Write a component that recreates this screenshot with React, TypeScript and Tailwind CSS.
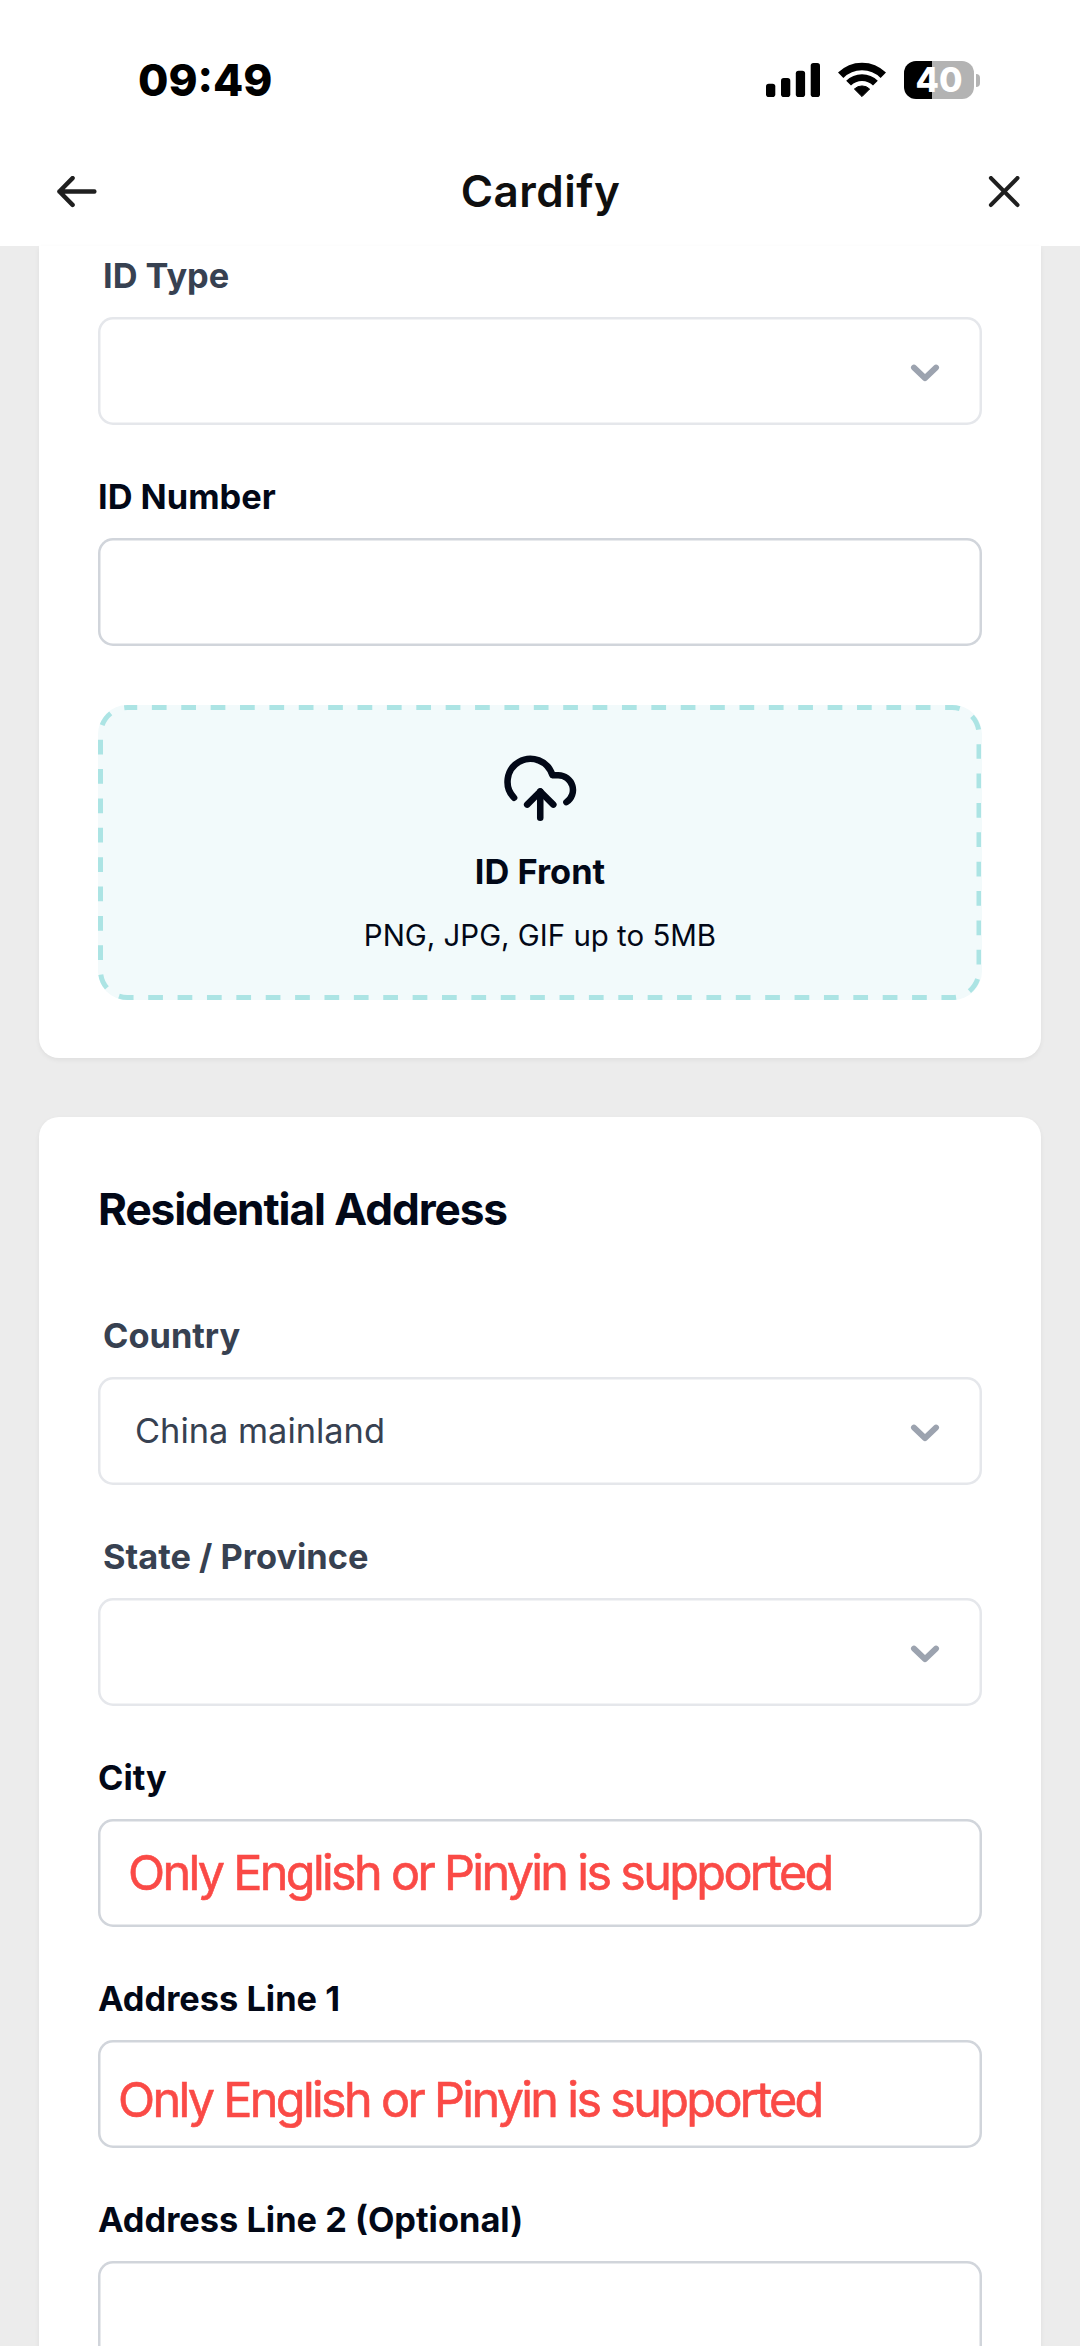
import type { ReactNode } from 'react'
import { CloudUpload } from 'lucide-react'
import { clsx } from 'clsx'

function StatusBar() {
  return (
    <div className="flex h-[138px] items-start justify-between pl-[138px] pr-[100px] pt-[53px]">
      <span className="pt-px text-[44px] font-extrabold leading-[53px] text-black">09:49</span>
      <div className="flex items-center pt-[8px]">
        <svg width="54" height="37" viewBox="0 0 54 37" aria-label="Signal">
          <rect x="0" y="21.7" width="9.3" height="13.3" rx="2.8" />
          <rect x="15" y="16" width="9.3" height="19" rx="2.8" />
          <rect x="29.8" y="8.7" width="9.3" height="26.3" rx="2.8" />
          <rect x="44.7" y="1" width="9.3" height="34" rx="2.8" />
        </svg>
        <svg className="ml-[18px]" width="48" height="37" viewBox="0 0 48 37" aria-label="Wi-Fi">
          <path d="M24 34.6 16.4 27a11 11 0 0 1 15.2 0z" strokeWidth="1" stroke="#000" strokeLinejoin="round" />
          <path d="M10.6 21.2a19 19 0 0 1 26.8 0" fill="none" stroke="#000" strokeWidth="6.8" />
          <path d="M2.7 13.3a30.1 30.1 0 0 1 42.6 0" fill="none" stroke="#000" strokeWidth="7.6" />
        </svg>
        <div className="ml-[18px] flex h-[38px] w-[70px] items-center justify-center rounded-[12px] bg-[linear-gradient(to_right,#000_40%,#b3b3b3_40%)]">
          <span className="text-[34px] font-extrabold leading-[38px] text-white">40</span>
        </div>
        <div className="ml-[2px] h-[13px] w-[4px] rounded-r-full bg-[#b3b3b3]" />
      </div>
    </div>
  )
}

function NavBar() {
  return (
    <div className="flex h-[108px] items-center justify-between pl-[57px] pr-[60px]">
      <svg width="40" height="32" viewBox="0 0 40 32" fill="none" stroke="#1f1f1f" strokeWidth="4.4" strokeLinecap="round" strokeLinejoin="round" aria-label="Back">
        <path d="M37.4 15.5H2.4M15.6 2.1 2.4 15.5l13.2 13.4" />
      </svg>
      <h1 className="-mt-[3px] mr-[4px] text-[44px] font-semibold leading-[52px] tracking-[0.5px] text-[#0f0f0f]">Cardify</h1>
      <svg width="32" height="32" viewBox="0 0 32 32" fill="none" stroke="#1f1f1f" strokeWidth="4.2" strokeLinecap="round" aria-label="Close">
        <path d="M3 2.1 29.4 28.9M29.4 2.1 3 28.9" />
      </svg>
    </div>
  )
}

function Card({ children, className }: { children: ReactNode; className?: string }) {
  return (
    <section className={clsx('mx-[39px] bg-white px-[59px] shadow-[0_2px_5px_rgba(0,0,0,0.06)]', className)}>
      {children}
    </section>
  )
}

function SelectField({ label, value }: { label: string; value?: string }) {
  return (
    <div className="h-[221px]">
      <div className="pl-[5px] text-[34.36px] font-[650] leading-[49px] text-[#374151]">{label}</div>
      <div className="mt-[17px] flex h-[108px] items-center justify-between rounded-[15px] bg-white pl-[37px] pr-[42px] shadow-[inset_0_0_0_2.5px_#e5e7eb]">
        <span className="pb-[2px] text-[34.36px] leading-[49px] text-[#374151]">{value}</span>
        <svg className="mt-[3px]" width="30" height="20" viewBox="0 0 30 20" fill="none" stroke="#9ca3af" strokeWidth="6" strokeLinecap="round" strokeLinejoin="round">
          <path d="M4 4.6 15 15.2 26 4.6" />
        </svg>
      </div>
    </div>
  )
}

function InputField({ label, children }: { label: string; children?: ReactNode }) {
  return (
    <div className="h-[221px]">
      <div className="text-[34.36px] font-[650] leading-[49px] text-[#020817]">{label}</div>
      <div className="mt-[17px] flex h-[108px] items-start rounded-[15px] bg-white shadow-[inset_0_0_0_2.5px_#d1d5db]">
        {children}
      </div>
    </div>
  )
}

function Note({ className }: { className: string }) {
  return (
    <p className={clsx('whitespace-nowrap text-[48.5px] leading-[58px] tracking-[-2.66px] text-[#fa4a46] [-webkit-text-stroke:0.6px_#fa4a46]', className)}>
      Only English or Pinyin is supported
    </p>
  )
}

function UploadBox() {
  return (
    <div className="relative flex h-[295px] flex-col items-center rounded-[29px] bg-[#f2fafb] pt-[44px] text-[#020817]">
      <svg className="absolute inset-0" width="883" height="295" fill="none">
        <rect x="2.5" y="2.5" width="878.5" height="290" rx="27" stroke="#ace4e4" strokeWidth="5" strokeDasharray="14.72 14.66" strokeDashoffset="5" />
      </svg>
      <CloudUpload size={78.5} strokeWidth={2} />
      <div className="mt-[19.5px] text-[34.36px] font-[650] leading-[49px]">ID Front</div>
      <div className="mt-[20px] text-[29.45px] leading-[39px]">PNG, JPG, GIF up to 5MB</div>
    </div>
  )
}

export default function App() {
  return (
    <div className="h-[2346px] w-[1080px] overflow-hidden bg-[#ececec] font-['Inter',sans-serif]">
      <header className="bg-white">
        <StatusBar />
        <NavBar />
      </header>
      <Card className="h-[812px] rounded-b-[20px] pt-[5px]">
        <SelectField label="ID Type" />
        <InputField label="ID Number" />
        <div className="mt-[12px]">
          <UploadBox />
        </div>
      </Card>
      <Card className="mt-[59px] h-[1300px] rounded-t-[20px] pt-[65px]">
        <h2 className="text-[44.2px] font-[650] leading-[54px] tracking-[-1.1px] text-[#020817]">
          Residential Address
        </h2>
        <div className="mt-[75px]">
          <SelectField label="Country" value="China mainland" />
          <SelectField label="State / Province" />
          <InputField label="City">
            <Note className="ml-[30px] mt-[25px]" />
          </InputField>
          <InputField label="Address Line 1">
            <Note className="ml-[20px] mt-[31px]" />
          </InputField>
          <InputField label="Address Line 2 (Optional)" />
        </div>
      </Card>
    </div>
  )
}
